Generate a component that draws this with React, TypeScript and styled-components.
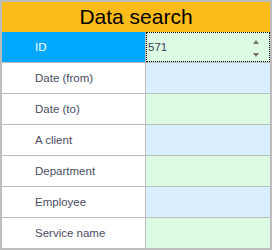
import * as React from 'react';
import styled, { createGlobalStyle } from 'styled-components';

const GlobalStyle = createGlobalStyle`
    html, body {
        margin: 0;
        padding: 0;
        background: #ffffff;
    }
    * {
        box-sizing: border-box;
    }
`;

const Panel = styled('div')`
    width: 272px;
    height: 250px;
    border: 2px solid #bdbdbd;
    background: #bdbdbd;
    display: flex;
    flex-direction: column;
    font-family: 'Liberation Sans', Arial, sans-serif;
`;

const Header = styled('div')`
    height: 30px;
    background: #fdbb1a;
    color: #000000;
    font-size: 21px;
    display: flex;
    align-items: center;
    justify-content: center;
    padding-bottom: 1px;
`;

const Grid = styled('div')`
    display: grid;
    grid-template-columns: 143px 124px;
    grid-auto-rows: 30px;
    column-gap: 1px;
    row-gap: 1px;
`;

const Label = styled('div')<{ $active?: boolean }>`
    display: flex;
    align-items: center;
    padding-left: 33px;
    font-size: 11.5px;
    color: ${(p) => (p.$active ? '#ffffff' : '#4b4b63')};
    background: ${(p) => (p.$active ? '#00a8ff' : '#ffffff')};
`;

const Field = styled('div')<{ $tint: 'green' | 'blue'; $focused?: boolean }>`
    position: relative;
    display: flex;
    align-items: center;
    padding-left: 1px;
    font-size: 11.5px;
    color: #3c3c5a;
    background: ${(p) => (p.$tint === 'green' ? '#ddfbe3' : '#d9efff')};
    border: ${(p) => (p.$focused ? '1px dotted #000000' : '1px solid transparent')};
`;

const Spinner = styled('div')`
    position: absolute;
    right: 10px;
    top: 7px;
    display: flex;
    flex-direction: column;
    gap: 9px;
`;

const Arrow = styled('div')<{ $down?: boolean }>`
    width: 0;
    height: 0;
    border-left: 3.5px solid transparent;
    border-right: 3.5px solid transparent;
    ${(p) =>
        p.$down
            ? 'border-top: 4px solid #747474;'
            : 'border-bottom: 4px solid #747474;'}
`;

const rows = [
    'ID',
    'Date (from)',
    'Date (to)',
    'A client',
    'Department',
    'Employee',
    'Service name',
];

const App: React.FunctionComponent = () => {
    return (
        <>
            <GlobalStyle />
            <Panel>
                <Header>Data search</Header>
                <Grid>
                    {rows.map((name, index) => (
                        <React.Fragment key={name}>
                            <Label $active={index === 0}>{name}</Label>
                            <Field
                                $tint={index % 2 === 0 ? 'green' : 'blue'}
                                $focused={index === 0}
                            >
                                {index === 0 && (
                                    <>
                                        571
                                        <Spinner>
                                            <Arrow />
                                            <Arrow $down />
                                        </Spinner>
                                    </>
                                )}
                            </Field>
                        </React.Fragment>
                    ))}
                </Grid>
            </Panel>
        </>
    );
};

export default App;
